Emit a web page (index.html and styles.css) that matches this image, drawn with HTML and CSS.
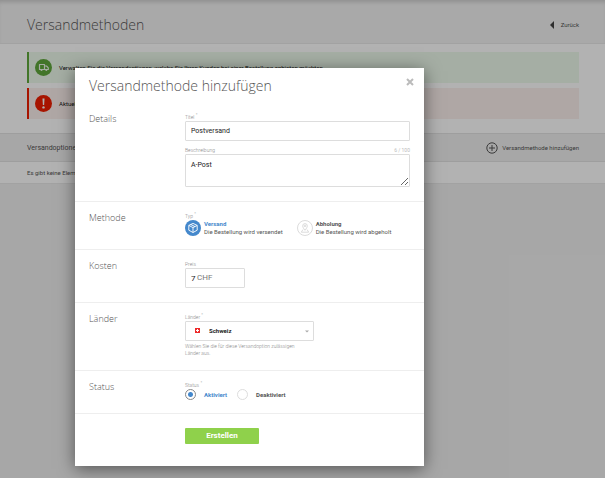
FILE: index.html
```html
<!DOCTYPE html>
<html lang="de">
<head>
<meta charset="utf-8">
<title>Versandmethoden</title>
<link rel="stylesheet" href="styles.css">
</head>
<body>
<div class="page">
  <header class="page-header">
    <h1 class="title">Versandmethoden</h1>
    <a class="back" href="#"><svg class="back-arrow" viewBox="0 0 4 8"><path d="M4 0v8L0 4z"/></svg>Zurück</a>
  </header>
  <main>
    <div class="notices">
      <div class="notice notice-info">
        <svg class="notice-icon" viewBox="0 0 17 17"><circle cx="8.500" cy="8.500" r="8.500" fill="#5fa83c"/><g fill="none" stroke="#eef6ea" stroke-width="1.200" stroke-linejoin="round"><path d="M4.500 10.500V5.500h5v5z"/><path d="M9.500 7h2l1.800 1.800v1.700H9.500"/></g><g fill="#eef6ea"><circle cx="6.500" cy="10.900" r="1"/><circle cx="11.300" cy="10.900" r="1"/></g></svg>
        <p>Verwalten Sie die Versandoptionen, welche Sie Ihren Kunden bei einer Bestellung anbieten möchten.</p>
      </div>
      <div class="notice notice-error">
        <svg class="notice-icon" viewBox="0 0 17 17"><circle cx="8.500" cy="8.500" r="8.500" fill="#f01e00"/><path d="M7.500 3.500h2l-.4 6.500H7.900z" fill="#fff"/><circle cx="8.500" cy="12.400" r="1.200" fill="#fff"/></svg>
        <p>Aktuell</p>
      </div>
    </div>
    <div class="list-head">
      <h2 class="list-title">Versandoptionen</h2>
      <a class="add" href="#"><svg class="add-icon" viewBox="0 0 12 12" fill="none" stroke="#555"><circle cx="6" cy="6" r="5.200"/><path d="M6 3v6M3 6h6"/></svg>Versandmethode hinzufügen</a>
    </div>
    <p class="list-empty">Es gibt keine Elemente</p>
  </main>
</div>

<div class="overlay">
  <form class="dialog" role="dialog" aria-labelledby="dialog-title">
    <header class="dialog-header">
      <h2 class="title" id="dialog-title">Versandmethode hinzufügen</h2>
      <button class="close" type="button" aria-label="Schliessen"><svg viewBox="0 0 8 8" fill="none" stroke="#bbb" stroke-width="2"><path d="M1 1l6 6M7 1L1 7"/></svg></button>
    </header>

    <section class="row row-large">
      <h3 class="row-title">Details</h3>
      <div class="fields">
        <label class="label" for="name">Titel <sup>*</sup></label>
        <input class="control" id="name" type="text" value="Postversand">
        <div class="label-line">
          <label class="label" for="description">Beschreibung</label>
          <span class="counter">6 / 100</span>
        </div>
        <textarea class="control area" id="description">A-Post</textarea>
      </div>
    </section>

    <section class="row">
      <h3 class="row-title">Methode</h3>
      <div class="fields">
        <span class="label">Typ <sup>*</sup></span>
        <div class="methods">
          <label class="method">
            <input class="method-input" type="radio" name="method" checked>
            <svg class="method-icon" viewBox="0 0 16 16"><circle cx="8" cy="8" r="8" fill="#4488cc"/><path d="M8 3.400l4.200 2v4.800L8 12.500l-4.200-2.300V5.400zM3.800 5.400L8 7.600l4.200-2.200M8 7.600v4.900M5.800 4.500L10 6.600" fill="none" stroke="#fff" stroke-width=".9" stroke-linejoin="round"/></svg>
            <span class="method-text"><b>Versand</b><span>Die Bestellung wird versendet</span></span>
          </label>
          <label class="method">
            <input class="method-input" type="radio" name="method">
            <svg class="method-icon" viewBox="0 0 16 16" fill="none" stroke="#d2d2d2" stroke-width=".8"><circle cx="8" cy="8" r="7.500"/><path d="M8 10.300C6.600 8.400 5.700 7.300 5.700 5.900a2.300 2.300 0 0 1 4.600 0C10.300 7.300 9.400 8.400 8 10.300z"/><circle cx="8" cy="5.900" r=".8"/><path d="M6 9.500l-1.700 2.700h7.400L10 9.500"/></svg>
            <span class="method-text"><b>Abholung</b><span>Die Bestellung wird abgeholt</span></span>
          </label>
        </div>
      </div>
    </section>

    <section class="row row-large">
      <h3 class="row-title">Kosten</h3>
      <div class="fields">
        <label class="label" for="price">Preis</label>
        <div class="control price"><input class="price-input" id="price" type="text" value="7"><span>CHF</span></div>
      </div>
    </section>

    <section class="row">
      <h3 class="row-title">Länder</h3>
      <div class="fields">
        <label class="label" for="country">Länder <sup>*</sup></label>
        <div class="select-wrap">
          <select class="control select" id="country"><option>Schweiz</option></select>
          <svg class="flag" viewBox="0 0 5 5"><path d="M0 0h5v5H0z" fill="#ee2a2a"/><path d="M2 1h1v1h1v1H3v1H2V3H1V2h1z" fill="#fff"/></svg>
          <svg class="caret" viewBox="0 0 4 3"><path d="M0 .5h4L2 2.500z" fill="#aaa"/></svg>
        </div>
        <p class="hint">Wählen Sie die für diese Versandoption zulässigen Länder aus.</p>
      </div>
    </section>

    <section class="row">
      <h3 class="row-title">Status</h3>
      <div class="fields">
        <span class="label">Status <sup>*</sup></span>
        <div class="states">
          <label class="state"><input class="radio" type="radio" name="status" checked><b>Aktiviert</b></label>
          <label class="state"><input class="radio" type="radio" name="status"><b>Deaktiviert</b></label>
        </div>
      </div>
    </section>

    <footer class="dialog-footer">
      <button class="submit" type="submit">Erstellen</button>
    </footer>
  </form>
</div>
</body>
</html>
```
FILE: styles.css
```css
* {
  box-sizing: border-box;
}

body {
  margin: 0;
  min-height: 100vh;
  background: #f0f0f0;
  color: #555;
  font: 6px/8px Roboto, "Liberation Sans", sans-serif;
}

h1, h2, h3, p {
  margin: 0;
}

a {
  color: inherit;
  text-decoration: none;
}

button, input, select, textarea {
  margin: 0;
  color: inherit;
  font: inherit;
}

svg {
  display: block;
  flex: none;
}

.title {
  color: #555;
  font: 300 14px/20px "Open Sans", sans-serif;
}

/* Page behind the dialog */
.page-header,
.list-head {
  display: flex;
  align-items: center;
  justify-content: space-between;
  padding: 0 26px 0 27px;
}

.page-header {
  height: 44px;
  padding-top: 6px;
  border-bottom: 1px solid #e8e8e8;
  background: #f3f3f3;
  box-shadow: inset 0 4px 4px -2px #ccc;
}

.back,
.add {
  display: flex;
  align-items: center;
}

.back {
  gap: 7px;
}

.back-arrow {
  width: 4px;
  height: 8px;
  fill: #444;
}

.notices {
  display: grid;
  gap: 5px;
  padding: 8px 26px 14px 27px;
  background: #fff;
}

.notice {
  display: flex;
  align-items: center;
  gap: 7px;
  height: 31px;
  padding-left: 6px;
  border-left: 2px solid;
}

.notice-info {
  border-color: #5fa83c;
  background: #edf9eb;
}

.notice-error {
  border-color: #f01e00;
  background: #fbf0ed;
}

.notice p {
  color: #111;
}

.notice-icon {
  width: 17px;
  height: 17px;
}

.list-head {
  height: 29px;
  border: solid #e2e2e2;
  border-width: 1px 0;
  background: #f0f0f0;
}

.list-title {
  font-size: 7px;
  font-weight: 400;
}

.add {
  gap: 4px;
}

.add-icon {
  width: 12px;
  height: 12px;
}

.list-empty {
  padding: 7px 27px 6px;
  border-bottom: 1px solid #e8e8e8;
  background: #fff;
}

/* Dialog */
.overlay {
  position: absolute;
  inset: 0;
  padding: 68px 181px 12px 75px;
  background: rgba(0, 0, 0, 0.3);
}

.dialog {
  background: #fff;
  box-shadow: 0 3px 16px rgba(0, 0, 0, 0.5);
}

.dialog-header {
  display: flex;
  justify-content: space-between;
  padding: 8px 10px 7px 14px;
}

.close {
  width: 8px;
  height: 8px;
  margin-top: 2px;
  padding: 0;
  border: 0;
  background: none;
}

.row {
  display: grid;
  grid-template-columns: 96px 1fr;
  padding: 11px 14px 13px;
  border-bottom: 1px solid #eee;
}

.row-large {
  padding-bottom: 14px;
}

.row-title {
  color: #555;
  font: 300 9px/10px "Open Sans", sans-serif;
}

.label {
  display: block;
  color: #888;
  font-size: 5px;
  font-weight: 300;
  line-height: 7px;
}

.label sup {
  line-height: 0;
}

.label-line {
  display: flex;
  justify-content: space-between;
  margin-top: 6px;
}

.counter {
  color: #bbb;
  font-size: 5px;
  line-height: 7px;
}

.control {
  display: block;
  width: 100%;
  height: 20px;
  padding: 0 5px;
  border: 1px solid #ddd;
  border-radius: 1px;
  background: #fff;
  color: #222;
  font-size: 7px;
}

.area {
  height: 33px;
  padding: 6px 5px;
}

.methods {
  display: flex;
  gap: 14px;
}

.method {
  display: flex;
  gap: 3px;
}

.method-input {
  position: absolute;
  opacity: 0;
}

.method-icon {
  width: 16px;
  height: 16px;
}

.method-text {
  display: grid;
  color: #555;
}

.method-text span {
  white-space: nowrap;
}

.method-input:checked ~ .method-text b,
.radio:checked + b {
  color: #4488cc;
}

.price {
  display: flex;
  align-items: center;
  width: 60px;
  color: #777;
  font-size: 8px;
}

.price-input {
  width: 6px;
  padding: 0;
  border: 0;
  color: #222;
}

.select-wrap {
  position: relative;
  width: 129px;
}

.select {
  appearance: none;
  padding-left: 23px;
  font-size: 6px;
  font-weight: 700;
}

.flag {
  position: absolute;
  top: 7px;
  left: 10px;
  width: 5px;
  height: 5px;
}

.caret {
  position: absolute;
  top: 9px;
  right: 5px;
  width: 4px;
  height: 3px;
}

.hint {
  width: 124px;
  margin-top: 2px;
  color: #888;
  font-size: 5px;
  font-weight: 300;
  line-height: 7px;
}

.states,
.state {
  display: flex;
  align-items: center;
}

.states {
  gap: 10px;
}

.state {
  gap: 8px;
}

.radio {
  appearance: none;
  width: 11px;
  height: 11px;
  border: 1px solid #ddd;
  border-radius: 50%;
  background: #fff;
}

.radio:checked {
  border-color: #888;
  background: radial-gradient(circle, #4488cc 2px, #fff 3px);
}

.dialog-footer {
  padding: 14px 14px 22px 110px;
}

.submit {
  display: block;
  width: 74px;
  height: 16px;
  padding: 0;
  border: 0;
  border-radius: 1px;
  background: #8fd14b;
  color: #fff;
  font-size: 8px;
  font-weight: 700;
}
```
